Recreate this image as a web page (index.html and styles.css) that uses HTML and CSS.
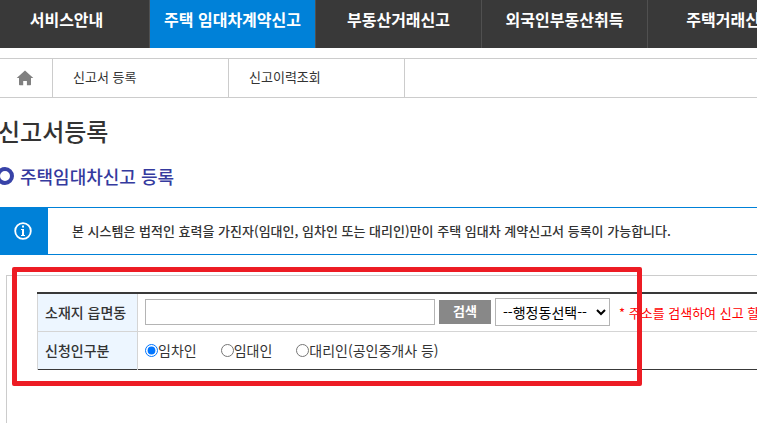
FILE: index.html
```html
<!doctype html>
<html lang="ko">
  <head>
    <meta charset="utf-8" />
    <title>신고서등록</title>
    <meta name="viewport" content="width=device-width, initial-scale=1.0" />
    <link rel="stylesheet" href="styles.css">
  </head>
  <body>
    <nav class="gnb">
      <a href="#">서비스안내</a>
      <a href="#" class="active">주택 임대차계약신고</a>
      <a href="#">부동산거래신고</a>
      <a href="#">외국인부동산취득</a>
      <a href="#">주택거래신고</a>
    </nav>

    <nav class="lnb">
      <a href="#" class="home" aria-label="홈">
        <svg width="18" height="16" viewBox="0 0 18 16">
          <path d="M9 0.5 L17.3 8 H15 V14.6 Q15 15.3 14.3 15.3 H10.9 V11 H7.2 V15.3 H3.7 Q3 15.3 3 14.6 V8 H0.7 Z" fill="#808080" />
        </svg>
      </a>
      <a href="#">신고서 등록</a>
      <a href="#">신고이력조회</a>
    </nav>

    <main>
      <h2>신고서등록</h2>
      <h3>주택임대차신고 등록</h3>

      <div class="notice">
        <div class="notice-icon">
          <svg width="18" height="18" viewBox="0 0 18 18">
            <circle cx="9" cy="9" r="7.8" fill="none" stroke="#fff" stroke-width="1.8" />
            <path d="M8 3.5 h2 v2 h-2 z M7 7 h3 v6 h1 v1 h-4 v-1 h1 v-5 h-1 z" fill="#fff" />
          </svg>
        </div>
        <p>본 시스템은 법적인 효력을 가진자(임대인, 임차인 또는 대리인)만이 주택 임대차 계약신고서 등록이 가능합니다.</p>
      </div>

      <form class="panel">
        <div class="highlight"></div>
        <table>
          <tr>
            <th scope="row"><label for="dong">소재지 읍면동</label></th>
            <td>
              <div class="fields">
                <input id="dong" name="dong" type="text" />
                <button type="button">검색</button>
                <select name="hdong" aria-label="행정동선택">
                  <option>--행정동선택--</option>
                </select>
                <span class="help">* 주소를 검색하여 신고 할 행정동을 선택하세요.</span>
              </div>
            </td>
          </tr>
          <tr>
            <th scope="row">신청인구분</th>
            <td>
              <div class="radios">
                <label><input type="radio" name="applicant" checked />임차인</label>
                <label><input type="radio" name="applicant" />임대인</label>
                <label><input type="radio" name="applicant" />대리인(공인중개사 등)</label>
              </div>
            </td>
          </tr>
        </table>
      </form>
    </main>
  </body>
</html>
```
FILE: styles.css
```css
* {
  box-sizing: border-box;
}

body {
  font-family: 'Noto Sans CJK KR', sans-serif;
  font-size: 14px;
  margin: 0;
  min-height: 100vh;
  display: flex;
  flex-direction: column;
  overflow: hidden;
  background-color: #fff;
  color: #333;
}

a {
  color: inherit;
  text-decoration: none;
}

.gnb {
  display: flex;
  margin-left: -16px;
  background-color: #393939;
}

.gnb a {
  flex: 0 0 166px;
  height: 48px;
  line-height: 38px;
  border-right: 1px solid #505050;
  color: #fff;
  font-size: 16px;
  font-weight: bold;
  text-align: center;
}

.gnb .active {
  background-color: #0081d8;
}

.lnb {
  display: flex;
  margin-top: 10px;
  border-top: 1px solid #ccc;
  border-bottom: 1px solid #ccc;
}

.lnb a {
  width: 176px;
  height: 38px;
  line-height: 36px;
  padding-left: 20px;
  border-right: 1px solid #ccc;
  font-size: 13px;
}

.lnb .home {
  display: flex;
  align-items: center;
  width: 53px;
  padding-left: 16px;
}

main {
  flex: 1;
  display: flex;
  flex-direction: column;
}

h2 {
  margin: 16px 0 0 -2px;
  font-size: 24px;
  font-weight: 500;
  line-height: 34px;
}

h3 {
  display: flex;
  align-items: center;
  gap: 6px;
  margin: 15px 0 0 -4px;
  color: #353a9e;
  font-size: 18px;
  font-weight: 500;
  line-height: 26px;
}

h3::before {
  content: '';
  box-sizing: border-box;
  width: 18px;
  height: 18px;
  border: 4px solid #3843a8;
  border-radius: 50%;
}

.notice {
  display: flex;
  margin-top: 18px;
  border-top: 1px solid #0081d8;
  border-bottom: 1px solid #0081d8;
}

.notice-icon {
  display: flex;
  align-items: center;
  width: 48px;
  height: 46px;
  padding-left: 14px;
  background-color: #0081d8;
}

.notice p {
  margin: 0 0 0 24px;
  font-size: 13px;
  font-weight: 500;
  line-height: 46px;
  white-space: nowrap;
}

.panel {
  position: relative;
  flex: 1;
  margin: 20px 0 0 6px;
  padding: 16px 0 0 30px;
  border-top: 1px solid #ccc;
  border-left: 1px solid #ccc;
}

table {
  width: 100%;
  border-top: 2px solid #393939;
  border-bottom: 1px solid #393939;
  border-collapse: collapse;
}

th {
  width: 100px;
  padding: 0 0 0 7px;
  border-left: 1px solid #d5d5d5;
  border-right: 1px solid #d5d5d5;
  background-color: #edf6ff;
  font-weight: 500;
  text-align: left;
  white-space: nowrap;
}

td {
  height: 38px;
  padding: 0 0 0 7px;
}

tr + tr th,
tr + tr td {
  border-top: 1px solid #d5d5d5;
}

.fields {
  display: flex;
  align-items: center;
  gap: 4px;
  width: 0;
}

.fields input {
  flex: none;
  width: 290px;
  height: 26px;
  border: 1px solid #b4b4b4;
}

.fields button {
  flex: none;
  width: 52px;
  height: 24px;
  padding: 0 0 4px;
  border: none;
  background-color: #888;
  color: #fff;
  font: bold 13px 'Noto Sans CJK KR', sans-serif;
}

.fields select {
  flex: none;
  width: 115px;
  height: 28px;
  padding: 0 0 0 3px;
  border: 1px solid #b4b4b4;
  background-color: #fff;
  color: #000;
  font: 14px 'Noto Sans CJK KR', sans-serif;
}

.help {
  margin-left: 5px;
  color: #f00;
  font-size: 13px;
  white-space: nowrap;
}

.radios {
  display: flex;
  gap: 24px;
}

.radios label {
  display: flex;
  align-items: center;
}

.radios input {
  margin: 0;
}

/* red frame over the form */
.highlight {
  position: absolute;
  top: -9px;
  left: 5px;
  width: 630px;
  height: 119px;
  border: 5px solid #ed1c24;
  border-radius: 2px;
}
```
